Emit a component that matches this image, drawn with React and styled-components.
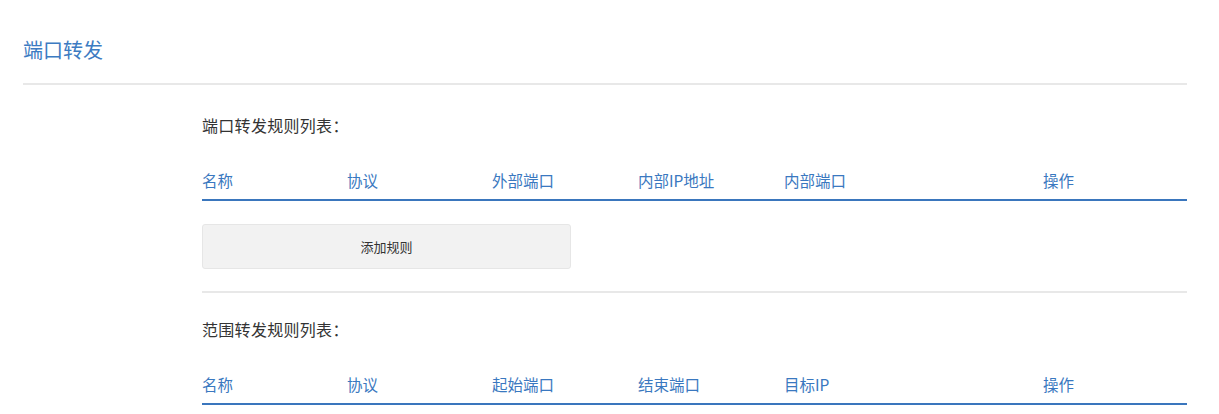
import React from 'react'
import styled, { createGlobalStyle } from 'styled-components'

const GlobalStyle = createGlobalStyle`
  body {
    margin: 0;
    background: #fff;
    font-family: "Microsoft YaHei", "Noto Sans CJK SC", "Noto Sans", sans-serif;
  }
`

const Page = styled.div`
  padding: 0 32px 0 23px;
`

const PageTitle = styled.h1`
  margin: 0;
  padding-top: 36px;
  padding-bottom: 19px;
  font-size: 20px;
  line-height: 28px;
  font-weight: 400;
  color: #3c7bc2;
  border-bottom: 2px solid #e8e8e8;
`

const Content = styled.div`
  padding-left: 179px;
`

const Section = styled.section`
  padding-top: ${(p) => p.$top}px;
`

const SectionTitle = styled.div`
  font-size: 16px;
  line-height: 24px;
  color: #333;
  letter-spacing: 0.3px;
`

const HeaderRow = styled.div`
  display: grid;
  grid-template-columns: 145px 145px 146px 146px 259px 1fr;
  margin-top: 24px;
  border-bottom: 2px solid #3a76bd;
`

const HeaderCell = styled.div`
  font-size: 15.5px;
  line-height: 38px;
  color: #3a78c0;
  white-space: nowrap;
`

const AddButton = styled.button`
  display: block;
  width: 369px;
  height: 45px;
  margin-top: 23px;
  background: #f2f2f2;
  border: 1px solid #e6e6e6;
  border-radius: 3px;
  font-family: inherit;
  font-size: 13px;
  color: #333;
  cursor: pointer;
`

const Divider = styled.div`
  margin-top: 22px;
  height: 2px;
  background: #e8e8e8;
`

const portColumns = ['名称', '协议', '外部端口', '内部IP地址', '内部端口', '操作']
const rangeColumns = ['名称', '协议', '起始端口', '结束端口', '目标IP', '操作']

const RuleHeader = ({ columns }) => (
  <HeaderRow>
    {columns.map((c) => (
      <HeaderCell key={c}>{c}</HeaderCell>
    ))}
  </HeaderRow>
)

export default function App() {
  return (
    <>
      <GlobalStyle />
      <Page>
        <PageTitle>端口转发</PageTitle>
        <Content>
          <Section $top={28}>
            <SectionTitle>端口转发规则列表：</SectionTitle>
            <RuleHeader columns={portColumns} />
            <AddButton type="button">添加规则</AddButton>
            <Divider />
          </Section>
          <Section $top={24}>
            <SectionTitle>范围转发规则列表：</SectionTitle>
            <RuleHeader columns={rangeColumns} />
          </Section>
        </Content>
      </Page>
    </>
  )
}
